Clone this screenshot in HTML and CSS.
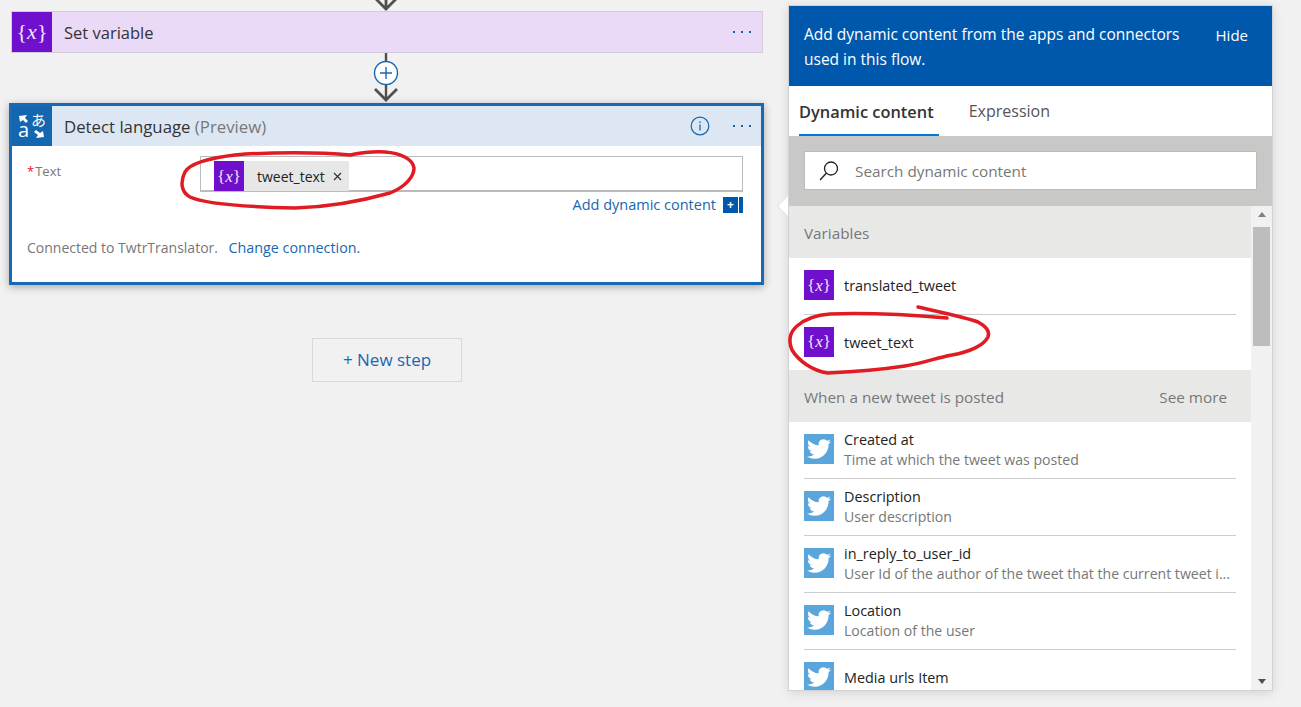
FILE: index.html
```html
<!DOCTYPE html>
<html lang="en">
<head>
    <meta charset="UTF-8">
    <title>Detect language - flow designer</title>
    <link rel="stylesheet" href="styles.css">
</head>
<body>
    <svg class="defs" width="0" height="0">
        <symbol id="bird" viewBox="0 0 24 24"><path fill="#fff" d="M23.953 4.57a10 10 0 01-2.825.775 4.958 4.958 0 002.163-2.723c-.951.555-2.005.959-3.127 1.184a4.92 4.92 0 00-8.384 4.482C7.69 8.095 4.067 6.13 1.64 3.162a4.822 4.822 0 00-.666 2.475c0 1.71.87 3.213 2.188 4.096a4.904 4.904 0 01-2.228-.616v.06a4.923 4.923 0 003.946 4.827 4.996 4.996 0 01-2.212.085 4.936 4.936 0 004.604 3.417 9.867 9.867 0 01-6.102 2.105c-.39 0-.779-.023-1.17-.067a13.995 13.995 0 007.557 2.209c9.053 0 13.998-7.496 13.998-13.985 0-.21 0-.42-.015-.63A9.935 9.935 0 0024 4.59z"/></symbol>
        <symbol id="dots" viewBox="0 0 18 4"><g fill="#1767b5"><rect x="0" y="1" width="2" height="2"/><rect x="8" y="1" width="2" height="2"/><rect x="16" y="1" width="2" height="2"/></g></symbol>
    </svg>

    <div class="canvas">
        <svg class="arrow-top" width="24" height="11" viewBox="0 0 24 11"><path d="M12 0v9M2 -1l10 10 10-10" fill="none" stroke="#505050" stroke-width="2.800"/></svg>

        <div class="card card-variable">
            <div class="card-icon icon-var"><span class="var-glyph">{<i>x</i>}</span></div>
            <div class="card-title">Set variable</div>
            <svg class="dots" width="18" height="4"><use href="#dots"/></svg>
        </div>

        <svg class="connector" width="26" height="50" viewBox="0 0 26 50">
            <path d="M13 0v9M13 32v15" fill="none" stroke="#505050" stroke-width="2.400"/>
            <path d="M2 36l11 11 11-11" fill="none" stroke="#505050" stroke-width="2.800"/>
            <circle cx="13" cy="20" r="11.500" fill="#fff" stroke="#1767b5" stroke-width="1.400"/>
            <path d="M13 14v12M7 20h12" stroke="#1767b5" stroke-width="1.400"/>
        </svg>

        <div class="card-active">
            <div class="card-head">
                <div class="card-icon icon-translate">
                    <svg class="swap" width="26" height="26" viewBox="0 0 26 26">
                        <path d="M0 3L8 2 6 5 9 8 7 10 4 7 1 9z" fill="#fff"/>
                        <path d="M25 24l-8 1 2-3-4-3 2-2 4 3 3-2z" fill="#fff"/>
                    </svg>
                    <span class="glyph-ja">あ</span>
                    <span class="glyph-a">a</span>
                </div>
                <div class="card-title title-long">Detect language <span class="preview">(Preview)</span></div>
                <svg class="info" width="20" height="20" viewBox="0 0 20 20">
                    <circle cx="10" cy="10" r="8.800" fill="none" stroke="#1767b5" stroke-width="1.200"/>
                    <path d="M10 8.500v6" stroke="#1767b5" stroke-width="1.300"/>
                    <rect x="9.300" y="5.400" width="1.400" height="1.500" fill="#1767b5"/>
                </svg>
                <svg class="dots" width="18" height="4"><use href="#dots"/></svg>
            </div>
            <div class="card-body">
                <div class="field">
                    <label class="field-label"><span class="req">*</span>Text</label>
                    <div class="field-input">
                        <div class="chip">
                            <div class="chip-icon icon-var"><span class="var-glyph small">{<i>x</i>}</span></div>
                            <span class="chip-text">tweet_text</span>
                            <svg class="chip-x" width="9" height="9" viewBox="0 0 9 9"><path d="M1 1l7 7M8 1l-7 7" stroke="#333" stroke-width="1.200"/></svg>
                        </div>
                    </div>
                </div>
                <div class="add-row">
                    <a class="link">Add dynamic content</a>
                    <span class="add-btn">+</span>
                    <span class="add-bar"></span>
                </div>
                <p class="connected">Connected to TwtrTranslator. <a class="link change">Change connection.</a></p>
            </div>
        </div>

        <button class="new-step">+ New step</button>
    </div>

    <div class="panel">
        <div class="panel-head">
            <p class="panel-msg">Add dynamic content from the apps and connectors used in this flow.</p>
            <span class="panel-hide">Hide</span>
        </div>
        <div class="tabs">
            <span class="tab active">Dynamic content</span>
            <span class="tab">Expression</span>
        </div>
        <div class="search-wrap">
            <div class="search">
                <svg width="22" height="22" viewBox="0 0 22 22"><circle cx="13" cy="8.500" r="6.500" fill="none" stroke="#222" stroke-width="1.300"/><path d="M8.500 13L2 20" stroke="#222" stroke-width="1.400"/></svg>
                <span>Search dynamic content</span>
            </div>
        </div>
        <div class="list-wrap">
            <div class="list">
                <div class="group">Variables</div>
                <div class="row">
                    <div class="row-icon icon-var"><span class="var-glyph small">{<i>x</i>}</span></div>
                    <div class="row-text"><div class="row-name">translated_tweet</div></div>
                </div>
                <div class="row last">
                    <div class="row-icon icon-var"><span class="var-glyph small">{<i>x</i>}</span></div>
                    <div class="row-text"><div class="row-name">tweet_text</div></div>
                </div>
                <div class="group">When a new tweet is posted <span class="see-more">See more</span></div>
                <div class="row">
                    <div class="row-icon icon-tw"><svg width="24" height="24"><use href="#bird"/></svg></div>
                    <div class="row-text"><div class="row-name">Created at</div><div class="row-desc">Time at which the tweet was posted</div></div>
                </div>
                <div class="row">
                    <div class="row-icon icon-tw"><svg width="24" height="24"><use href="#bird"/></svg></div>
                    <div class="row-text"><div class="row-name">Description</div><div class="row-desc">User description</div></div>
                </div>
                <div class="row">
                    <div class="row-icon icon-tw"><svg width="24" height="24"><use href="#bird"/></svg></div>
                    <div class="row-text"><div class="row-name">in_reply_to_user_id</div><div class="row-desc">User Id of the author of the tweet that the current tweet i...</div></div>
                </div>
                <div class="row">
                    <div class="row-icon icon-tw"><svg width="24" height="24"><use href="#bird"/></svg></div>
                    <div class="row-text"><div class="row-name">Location</div><div class="row-desc">Location of the user</div></div>
                </div>
                <div class="row last">
                    <div class="row-icon icon-tw"><svg width="24" height="24"><use href="#bird"/></svg></div>
                    <div class="row-text"><div class="row-name">Media urls Item</div></div>
                </div>
            </div>
            <div class="scrollbar">
                <span class="sb-up"></span>
                <span class="sb-thumb"></span>
                <span class="sb-down"></span>
            </div>
        </div>
        <span class="panel-tail"></span>
    </div>

    <!-- red hand drawn marks on top of the screenshot -->
    <svg class="scribble" width="1301" height="707" viewBox="0 0 1301 707">
        <path d="M350 155C320 152 270 152 235 155C210 158 190 163 185 172C180 182 181 192 190 197C205 204 250 207 295 208C330 207 365 200 390 193C405 187 414 177 414 168C413 159 400 153 385 152C370 151 360 153 350 155"/>
        <path d="M918 307C935 311 965 317 978 322C987 327 990 332 988 337C984 345 970 352 952 355C935 358 925 363 905 366C885 369 850 372 828 373C812 371 798 360 792 350C788 340 790 332 797 326C805 319 815 315 830 314C860 313 900 314 947 318"/>
    </svg>
</body>
</html>
```

FILE: styles.css
```css
* {
    box-sizing: border-box;
}
body {
    margin: 0;
    height: 707px;
    overflow: hidden;
    background-color: #f1f1f1;
    font-family: 'Open Sans', 'Noto Sans', sans-serif;
    color: #333;
    display: flex;
    align-items: flex-start;
}
.defs {
    position: absolute;
}
.canvas {
    width: 779px;
    padding-left: 9px;
    display: flex;
    flex-direction: column;
    align-items: flex-start;
}
.arrow-top {
    display: block;
    margin-left: 365px;
}
.connector {
    display: block;
    margin-left: 364px;
}

/* cards */
.card {
    display: flex;
    align-items: center;
    height: 42px;
    width: 752px;
    margin-left: 2px;
    border: 1px solid #d3cbd9;
    background-color: #ead9f7;
}
.card-icon {
    width: 40px;
    height: 40px;
    flex: none;
    display: flex;
    align-items: center;
    justify-content: center;
    position: relative;
}
.card-title {
    flex: 1;
    margin-left: 12px;
    font-size: 16.500px;
    color: #333;
}
.title-long {
    font-size: 16.800px;
}
.preview {
    color: #777;
}
.dots {
    display: block;
    flex: none;
    margin-right: 11px;
}
.card-active {
    width: 755px;
    height: 182px;
    border: 3px solid #1a69b5;
    background-color: #fff;
    box-shadow: 0 2px 8px rgba(0, 0, 0, 0.3);
}
.card-head {
    display: flex;
    align-items: center;
    height: 40px;
    background-color: #dce7f3;
}
.card-head .dots {
    margin-right: 10px;
}
.info {
    display: block;
    margin-right: 23px;
}
.card-body {
    padding: 10px 18px 0 15px;
}

/* purple and blue icons */
.icon-var {
    background-color: #7010cc;
    color: #fff;
}
.var-glyph {
    font-family: 'Liberation Serif', serif;
    font-size: 22px;
    line-height: 1;
    color: #f0e4fb;
}
.var-glyph.small {
    font-size: 17px;
}
.icon-translate {
    background-color: #1566b0;
    color: #fff;
}
.swap {
    position: absolute;
    left: 7px;
    top: 7px;
}
.glyph-ja {
    position: absolute;
    left: 19px;
    top: 5px;
    font-family: 'Noto Sans CJK JP', sans-serif;
    font-size: 15px;
    line-height: 18px;
}
.glyph-a {
    position: absolute;
    left: 6px;
    top: 11px;
    font-size: 20px;
    line-height: 26px;
}
.icon-tw {
    background-color: #5aa5dc;
}

/* form */
.field {
    display: flex;
}
.field-label {
    width: 173px;
    padding-top: 6px;
    font-size: 13px;
    color: #777;
}
.req {
    color: #e81123;
    margin-right: 1px;
}
.field-input {
    flex: 1;
    height: 36px;
    padding: 4px 0 0 13px;
    border: 1px solid #bbb;
    border-bottom-width: 2px;
}
.chip {
    display: inline-flex;
    align-items: center;
    height: 30px;
    width: 135px;
    background-color: #e6e7e6;
}
.chip-icon {
    width: 30px;
    height: 30px;
    display: flex;
    align-items: center;
    justify-content: center;
}
.chip-text {
    margin-left: 13px;
    font-size: 14px;
    color: #222;
}
.chip-x {
    margin-left: 8px;
}
.add-row {
    display: flex;
    align-items: center;
    justify-content: flex-end;
    margin-top: 4px;
    height: 17px;
}
.link {
    color: #1767b5;
    font-size: 14.500px;
}
.add-btn {
    width: 15px;
    height: 16px;
    margin-left: 7px;
    background-color: #0058ad;
    color: #fff;
    font-size: 12px;
    font-weight: 700;
    line-height: 16px;
    text-align: center;
}
.add-bar {
    width: 4px;
    height: 16px;
    margin-left: 1px;
    background-color: #0058ad;
}
.connected {
    margin: 25px 0 0;
    font-size: 14px;
    color: #777;
}
.change {
    margin-left: 7px;
    font-size: 14.300px;
}
.new-step {
    margin: 53px 0 0 303px;
    width: 150px;
    height: 44px;
    padding: 0 0 1px;
    border: 1px solid #d9d9d9;
    background: none;
    color: #1767b5;
    font-family: inherit;
    font-size: 17px;
}

/* dynamic content panel */
.panel {
    position: relative;
    width: 485px;
    height: 686px;
    margin: 5px 0 0 9px;
    border: 1px solid #d2d2d2;
    background-color: #fff;
    box-shadow: 0 2px 10px rgba(0, 0, 0, 0.12);
    display: flex;
    flex-direction: column;
}
.panel-head {
    display: flex;
    height: 80px;
    padding: 16px 15px 0;
    background-color: #0058ad;
    color: #fff;
}
.panel-msg {
    flex: 1;
    margin: 0;
    font-size: 15.500px;
    line-height: 25px;
    padding-right: 20px;
}
.panel-hide {
    flex: none;
    margin: 1px 9px 0 0;
    font-size: 15px;
    line-height: 25px;
}
.tabs {
    display: flex;
    height: 50px;
    padding-left: 10px;
}
.tab {
    padding: 14px 5px 0 0;
    margin-right: 30px;
    font-size: 16px;
    color: #555;
}
.tab.active {
    color: #333;
    font-weight: 600;
    font-size: 16.400px;
    border-bottom: 2px solid #0078d7;
}
.search-wrap {
    height: 70px;
    padding: 15px 15px 0;
    background-color: #c8c9c7;
}
.search {
    display: flex;
    align-items: center;
    height: 39px;
    padding-left: 13px;
    background-color: #fff;
    border: 1px solid #bcbcbc;
    font-size: 15.300px;
    color: #777;
}
.search span {
    margin-left: 15px;
}
.list-wrap {
    flex: 1;
    min-height: 0;
    display: flex;
}
.list {
    flex: 1;
    min-width: 0;
    overflow: hidden;
}
.group {
    display: flex;
    justify-content: space-between;
    align-items: center;
    height: 52px;
    padding: 2px 24px 0 15px;
    background-color: #e8e9e7;
    font-size: 15.300px;
    color: #777;
}
.see-more {
    flex: none;
}
.row {
    display: flex;
    align-items: center;
    height: 57px;
    margin: 0 15px;
    border-bottom: 1px solid #ccc;
}
.row.last {
    border-bottom: none;
    height: 55px;
}
.row-icon {
    width: 30px;
    height: 30px;
    flex: none;
    margin-bottom: 2px;
    display: flex;
    align-items: center;
    justify-content: center;
}
.row-icon svg {
    display: block;
}
.row-text {
    flex: 1;
    min-width: 0;
    margin-left: 10px;
}
.row-name {
    font-size: 14.400px;
    line-height: 20px;
    color: #222;
}
.row-desc {
    font-size: 14.100px;
    line-height: 20px;
    color: #777;
    white-space: nowrap;
}
.scrollbar {
    flex: none;
    width: 21px;
    padding: 6px 2px;
    background-color: #f1f1f1;
    display: flex;
    flex-direction: column;
    align-items: center;
}
.sb-up {
    border: 4px solid transparent;
    border-top: none;
    border-bottom: 5px solid #808080;
}
.sb-thumb {
    width: 17px;
    height: 119px;
    margin-top: 10px;
    background-color: #bdbdbd;
}
.sb-down {
    margin-top: auto;
    border: 4px solid transparent;
    border-bottom: none;
    border-top: 5px solid #505050;
}
.panel-tail {
    position: absolute;
    left: -11px;
    top: 190px;
    width: 0;
    height: 0;
    border-top: 10px solid transparent;
    border-bottom: 10px solid transparent;
    border-right: 10px solid #fff;
    filter: drop-shadow(-1px 0 0 #ddd);
}
.scribble {
    position: absolute;
    left: 0;
    top: 0;
    pointer-events: none;
}
.scribble path {
    fill: none;
    stroke: #e01b24;
    stroke-width: 3.500;
    stroke-linecap: round;
}
```
